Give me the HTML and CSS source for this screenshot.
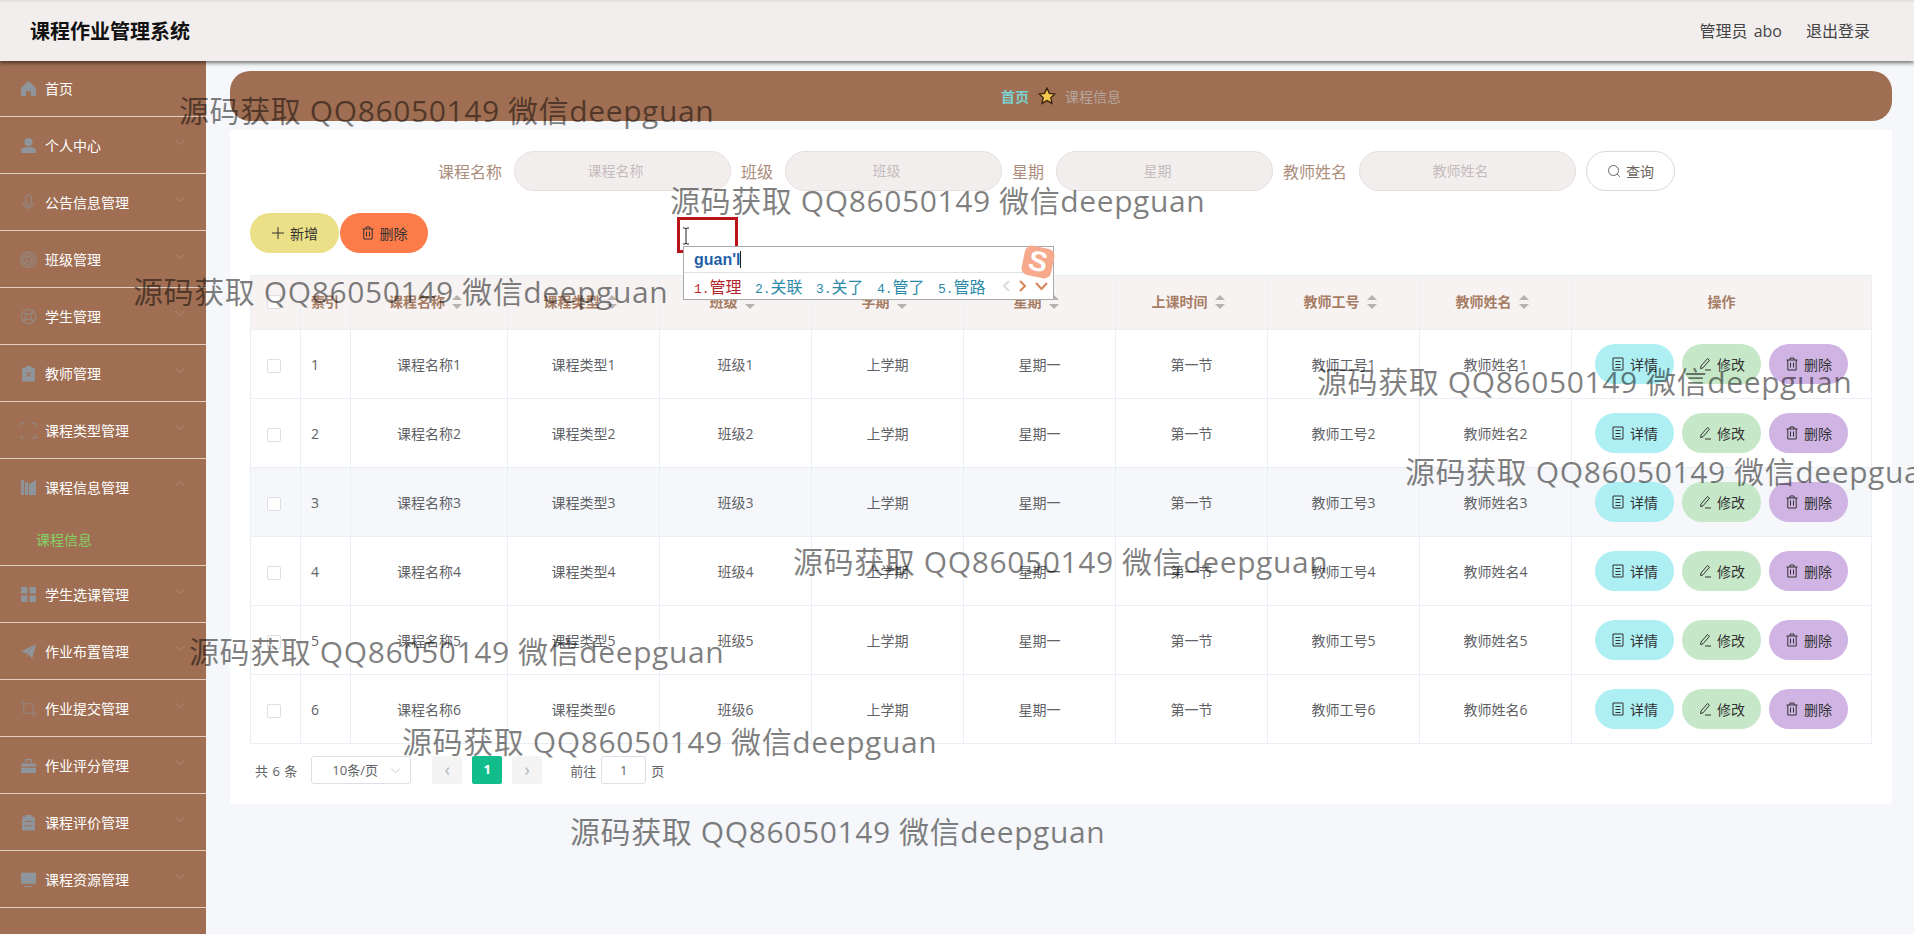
FILE: index.html
```html
<!DOCTYPE html>
<html lang="zh-CN">
<head>
  <meta charset="UTF-8">
  <title>课程作业管理系统</title>
  <link rel="stylesheet" href="styles.css">
</head>

<body>

<svg class="sprite" xmlns="http://www.w3.org/2000/svg">
  <symbol id="i-home" viewBox="0 0 16 16"><path d="M8 1 15 7.2V15H10.3V10.5H5.7V15H1V7.2Z" fill="currentColor"/></symbol>
  <symbol id="i-user" viewBox="0 0 16 16"><circle cx="8" cy="4.8" r="3.8" fill="currentColor"/><path d="M1 15V12.8C1 10.4 4 9.3 8 9.3S15 10.4 15 12.8V15Z" fill="currentColor"/></symbol>
  <symbol id="i-mic" viewBox="0 0 16 16"><g fill="none" stroke="currentColor" stroke-width="1.2"><rect x="5.4" y="1" width="5.2" height="9.4" rx="2.6"/><path d="M3.2 8.2C3.2 11 5.2 12.6 8 12.6S12.8 11 12.8 8.2M8 12.6V15.4"/></g></symbol>
  <symbol id="i-ring" viewBox="0 0 16 16"><g fill="none" stroke="currentColor" stroke-width="1.2"><circle cx="8" cy="8" r="7.2"/><circle cx="8" cy="8" r="5"/><circle cx="8" cy="8" r="2.6"/></g></symbol>
  <symbol id="i-help" viewBox="0 0 16 16"><g fill="none" stroke="currentColor"><circle cx="8" cy="8" r="6.8" stroke-width="1.2"/><circle cx="8" cy="8" r="2.8" stroke-width="1.2"/><path d="M3.2 3.2 6 6M12.8 3.2 10 6M3.2 12.8 6 10M12.8 12.8 10 10" stroke-width="1.8"/></g></symbol>
  <symbol id="i-badge" viewBox="0 0 16 16"><path d="M2 2.5H5.5V1H10.5V2.5H14V15.5H2Z" fill="currentColor"/><path d="M6 7 10 11M10 7 6 11" stroke="#a06f53" stroke-width="1.1"/></symbol>
  <symbol id="i-full" viewBox="0 0 16 16"><path d="M1 4.5V1H4.5M11.5 1H15V4.5M15 11.5V15H11.5M4.5 15H1V11.5" fill="none" stroke="currentColor" stroke-width="1.1"/></symbol>
  <symbol id="i-books" viewBox="0 0 16 16"><path d="M1 1H3.6V15H1ZM4.6 3H7.6V15H4.6ZM8.4 3 10 5 11.6 3 15 1V15H8.4Z" fill="currentColor"/></symbol>
  <symbol id="i-grid" viewBox="0 0 16 16"><path d="M1 1H7V7H1ZM9 1H15V7H9ZM1 9H7V15H1ZM9 9H15V15H9Z" fill="currentColor"/></symbol>
  <symbol id="i-send" viewBox="0 0 16 16"><path d="M15 1 11.5 14.5 7.8 10 6.5 14V9.3ZM15 1 1 8 5.6 9.6Z" fill="currentColor"/></symbol>
  <symbol id="i-crop" viewBox="0 0 16 16"><path d="M3.5 0V12.5H16M0 3.5H12.5V16" fill="none" stroke="currentColor" stroke-width="1.1"/></symbol>
  <symbol id="i-case" viewBox="0 0 16 16"><path d="M1 6H15V9H1ZM1 10H15V15H1Z" fill="currentColor"/><path d="M5.5 5.5V2.5H10.5V5.5" fill="none" stroke="currentColor" stroke-width="1.3"/></symbol>
  <symbol id="i-order" viewBox="0 0 16 16"><path d="M2 2.5H5V1H11V2.5H14V15.5H2Z" fill="currentColor"/><path d="M4.5 7H11.5M4.5 11H11.5" stroke="#a06f53" stroke-width="1"/></symbol>
  <symbol id="i-monitor" viewBox="0 0 16 16"><path d="M1 1.5H15V12H1Z" fill="currentColor"/><path d="M4.5 14.5H11.5" stroke="currentColor" stroke-width="1"/></symbol>
  <symbol id="i-down" viewBox="0 0 12 12"><path d="M1.5 4 6 8.5 10.5 4" fill="none" stroke="currentColor" stroke-width="1"/></symbol>
  <symbol id="i-up" viewBox="0 0 12 12"><path d="M1.5 8 6 3.5 10.5 8" fill="none" stroke="currentColor" stroke-width="1"/></symbol>
  <symbol id="i-plus" viewBox="0 0 14 14"><path d="M7 1V13M1 7H13" fill="none" stroke="currentColor" stroke-width="1"/></symbol>
  <symbol id="i-trash" viewBox="0 0 14 14"><path d="M1.5 3H12.5M5 3V1H9V3M2.8 3V13H11.2V3M5.5 5.5V10.5M8.5 5.5V10.5" fill="none" stroke="currentColor" stroke-width="1"/></symbol>
  <symbol id="i-doc" viewBox="0 0 14 14"><path d="M2 1H12V13H2ZM4.5 4.5H9.5M4.5 7.5H9.5M4.5 10.5H9.5" fill="none" stroke="currentColor" stroke-width="1"/></symbol>
  <symbol id="i-edit" viewBox="0 0 14 14"><path d="M3 9 9.5 1.5 11.5 3.2 5 10.8 2.6 11.6ZM7 13H13" fill="none" stroke="currentColor" stroke-width="1"/></symbol>
  <symbol id="i-search" viewBox="0 0 14 14"><path d="M6.5 1.5A5 5 0 1 0 6.5 11.5 5 5 0 1 0 6.5 1.5ZM10.2 10.2 12.8 12.8" fill="none" stroke="currentColor" stroke-width="1"/></symbol>
</svg>

<div class="topbar">
  <div class="brand">课程作业管理系统</div>
  <div class="topbarRight">
    <span class="adminName">管理员 abo</span>
    <span>退出登录</span>
  </div>
</div>

<div class="layout">
  <div class="sidebar">
    <div class="menuItem"><svg class="menuIcon"><use href="#i-home"/></svg><span>首页</span></div>
    <div class="menuItem"><svg class="menuIcon"><use href="#i-user"/></svg><span>个人中心</span><svg class="menuArrow"><use href="#i-down"/></svg></div>
    <div class="menuItem"><svg class="menuIcon thinIcon"><use href="#i-mic"/></svg><span>公告信息管理</span><svg class="menuArrow"><use href="#i-down"/></svg></div>
    <div class="menuItem"><svg class="menuIcon thinIcon"><use href="#i-ring"/></svg><span>班级管理</span><svg class="menuArrow"><use href="#i-down"/></svg></div>
    <div class="menuItem"><svg class="menuIcon thinIcon"><use href="#i-help"/></svg><span>学生管理</span><svg class="menuArrow"><use href="#i-down"/></svg></div>
    <div class="menuItem"><svg class="menuIcon"><use href="#i-badge"/></svg><span>教师管理</span><svg class="menuArrow"><use href="#i-down"/></svg></div>
    <div class="menuItem"><svg class="menuIcon thinIcon"><use href="#i-full"/></svg><span>课程类型管理</span><svg class="menuArrow"><use href="#i-down"/></svg></div>
    <div class="menuGroup">
      <div class="menuTitle"><svg class="menuIcon"><use href="#i-books"/></svg><span>课程信息管理</span><svg class="menuArrow"><use href="#i-up"/></svg></div>
      <div class="subItem">课程信息</div>
    </div>
    <div class="menuItem"><svg class="menuIcon"><use href="#i-grid"/></svg><span>学生选课管理</span><svg class="menuArrow"><use href="#i-down"/></svg></div>
    <div class="menuItem"><svg class="menuIcon"><use href="#i-send"/></svg><span>作业布置管理</span><svg class="menuArrow"><use href="#i-down"/></svg></div>
    <div class="menuItem"><svg class="menuIcon thinIcon"><use href="#i-crop"/></svg><span>作业提交管理</span><svg class="menuArrow"><use href="#i-down"/></svg></div>
    <div class="menuItem"><svg class="menuIcon"><use href="#i-case"/></svg><span>作业评分管理</span><svg class="menuArrow"><use href="#i-down"/></svg></div>
    <div class="menuItem"><svg class="menuIcon"><use href="#i-order"/></svg><span>课程评价管理</span><svg class="menuArrow"><use href="#i-down"/></svg></div>
    <div class="menuItem"><svg class="menuIcon"><use href="#i-monitor"/></svg><span>课程资源管理</span><svg class="menuArrow"><use href="#i-down"/></svg></div>
  </div>

  <div class="main">
    <div class="crumb">
      <span class="crumbHome">首页</span>
      <svg class="crumbStar" viewBox="0 0 16 16"><path d="M8 1 10.100 5.600 15 6.200 11.400 9.600 12.400 14.600 8 12.100 3.600 14.600 4.600 9.600 1 6.200 5.900 5.600Z" fill="#f5c94e" stroke="#3d2410" stroke-width="1.200"/></svg>
      <span class="crumbPage">课程信息</span>
    </div>

    <div class="card">
      <div class="searchRow">
        <div class="field"><label>课程名称</label><div class="searchInput">课程名称</div></div>
        <div class="field"><label>班级</label><div class="searchInput">班级</div></div>
        <div class="field"><label>星期</label><div class="searchInput">星期</div></div>
        <div class="field"><label>教师姓名</label><div class="searchInput">教师姓名</div></div>
        <div class="searchButton"><svg class="btnIcon"><use href="#i-search"/></svg>查询</div>
      </div>

      <div class="toolbar">
        <div class="pill pillAdd"><svg class="btnIcon"><use href="#i-plus"/></svg>新增</div>
        <div class="pill pillRemove"><svg class="btnIcon"><use href="#i-trash"/></svg>删除</div>
      </div>

      <table class="dataTable">
        <colgroup>
          <col class="colSmall"><col class="colSmall"><col class="colName">
          <col class="colNormal"><col class="colNormal"><col class="colNormal"><col class="colNormal"><col class="colNormal"><col class="colNormal"><col class="colNormal">
          <col class="colActions">
        </colgroup>
        <tr>
          <th class="checkCell"><span class="checkbox"></span></th>
          <th class="leftCell">索引</th>
          <th>课程名称<span class="sort"></span></th>
          <th>课程类型<span class="sort"></span></th>
          <th>班级<span class="sort"></span></th>
          <th>学期<span class="sort"></span></th>
          <th>星期<span class="sort"></span></th>
          <th>上课时间<span class="sort"></span></th>
          <th>教师工号<span class="sort"></span></th>
          <th>教师姓名<span class="sort"></span></th>
          <th>操作</th>
        </tr>
        <tr>
          <td class="checkCell"><span class="checkbox"></span></td><td class="leftCell">1</td><td>课程名称1</td><td>课程类型1</td><td>班级1</td><td>上学期</td><td>星期一</td><td>第一节</td><td>教师工号1</td><td>教师姓名1</td>
          <td><div class="actions"><div class="pill pillView"><svg class="btnIcon"><use href="#i-doc"/></svg>详情</div><div class="pill pillEdit"><svg class="btnIcon"><use href="#i-edit"/></svg>修改</div><div class="pill pillDelete"><svg class="btnIcon"><use href="#i-trash"/></svg>删除</div></div></td>
        </tr>
        <tr>
          <td class="checkCell"><span class="checkbox"></span></td><td class="leftCell">2</td><td>课程名称2</td><td>课程类型2</td><td>班级2</td><td>上学期</td><td>星期一</td><td>第一节</td><td>教师工号2</td><td>教师姓名2</td>
          <td><div class="actions"><div class="pill pillView"><svg class="btnIcon"><use href="#i-doc"/></svg>详情</div><div class="pill pillEdit"><svg class="btnIcon"><use href="#i-edit"/></svg>修改</div><div class="pill pillDelete"><svg class="btnIcon"><use href="#i-trash"/></svg>删除</div></div></td>
        </tr>
        <tr class="hoverRow">
          <td class="checkCell"><span class="checkbox"></span></td><td class="leftCell">3</td><td>课程名称3</td><td>课程类型3</td><td>班级3</td><td>上学期</td><td>星期一</td><td>第一节</td><td>教师工号3</td><td>教师姓名3</td>
          <td><div class="actions"><div class="pill pillView"><svg class="btnIcon"><use href="#i-doc"/></svg>详情</div><div class="pill pillEdit"><svg class="btnIcon"><use href="#i-edit"/></svg>修改</div><div class="pill pillDelete"><svg class="btnIcon"><use href="#i-trash"/></svg>删除</div></div></td>
        </tr>
        <tr>
          <td class="checkCell"><span class="checkbox"></span></td><td class="leftCell">4</td><td>课程名称4</td><td>课程类型4</td><td>班级4</td><td>上学期</td><td>星期一</td><td>第一节</td><td>教师工号4</td><td>教师姓名4</td>
          <td><div class="actions"><div class="pill pillView"><svg class="btnIcon"><use href="#i-doc"/></svg>详情</div><div class="pill pillEdit"><svg class="btnIcon"><use href="#i-edit"/></svg>修改</div><div class="pill pillDelete"><svg class="btnIcon"><use href="#i-trash"/></svg>删除</div></div></td>
        </tr>
        <tr>
          <td class="checkCell"><span class="checkbox"></span></td><td class="leftCell">5</td><td>课程名称5</td><td>课程类型5</td><td>班级5</td><td>上学期</td><td>星期一</td><td>第一节</td><td>教师工号5</td><td>教师姓名5</td>
          <td><div class="actions"><div class="pill pillView"><svg class="btnIcon"><use href="#i-doc"/></svg>详情</div><div class="pill pillEdit"><svg class="btnIcon"><use href="#i-edit"/></svg>修改</div><div class="pill pillDelete"><svg class="btnIcon"><use href="#i-trash"/></svg>删除</div></div></td>
        </tr>
        <tr>
          <td class="checkCell"><span class="checkbox"></span></td><td class="leftCell">6</td><td>课程名称6</td><td>课程类型6</td><td>班级6</td><td>上学期</td><td>星期一</td><td>第一节</td><td>教师工号6</td><td>教师姓名6</td>
          <td><div class="actions"><div class="pill pillView"><svg class="btnIcon"><use href="#i-doc"/></svg>详情</div><div class="pill pillEdit"><svg class="btnIcon"><use href="#i-edit"/></svg>修改</div><div class="pill pillDelete"><svg class="btnIcon"><use href="#i-trash"/></svg>删除</div></div></td>
        </tr>
      </table>

      <div class="pager">
        <span class="pagerTotal">共 6 条</span>
        <div class="pagerSize">10条/页<svg class="pagerArrow"><use href="#i-down"/></svg></div>
        <div class="pageBtn">‹</div>
        <div class="pageBtn pageActive">1</div>
        <div class="pageBtn">›</div>
        <span class="pagerGoto">前往</span>
        <div class="pagerInput">1</div>
        <span>页</span>
      </div>
    </div>
  </div>
</div>

<!-- input method popup sits over the page -->
<div class="redBox"></div>
<svg class="textCursor" viewBox="0 0 8 18"><path d="M1 1H3.2L4 2 4.8 1H7M4 2V16M1 17H3.2L4 16 4.8 17H7" fill="none" stroke="#222" stroke-width="1"/></svg>
<div class="ime">
  <div class="imeInput">guan'l<span class="imeCaret"></span></div>
  <div class="imeList">
    <span class="imeWord imeFirst"><i>1.</i>管理</span>
    <span class="imeWord"><i>2.</i>关联</span>
    <span class="imeWord"><i>3.</i>关了</span>
    <span class="imeWord"><i>4.</i>管了</span>
    <span class="imeWord"><i>5.</i>管路</span>
    <svg class="imeArrows" viewBox="0 0 48 14"><path d="M7 2 2 7 7 12" fill="none" stroke="#ddd" stroke-width="2"/><path d="M18 2 23 7 18 12" fill="none" stroke="#d9855a" stroke-width="2"/><path d="M34 4 39.500 10 45 4" fill="none" stroke="#d9855a" stroke-width="2"/></svg>
  </div>
  <div class="imeLogo"><span>S</span></div>
</div>

<div class="watermarks">
  <div class="wm wm1">源码获取 QQ86050149 微信deepguan</div>
  <div class="wm wm2">源码获取 QQ86050149 微信deepguan</div>
  <div class="wm wm3">源码获取 QQ86050149 微信deepguan</div>
  <div class="wm wm4">源码获取 QQ86050149 微信deepguan</div>
  <div class="wm wm5">源码获取 QQ86050149 微信deepguan</div>
  <div class="wm wm6">源码获取 QQ86050149 微信deepguan</div>
  <div class="wm wm7">源码获取 QQ86050149 微信deepguan</div>
  <div class="wm wm8">源码获取 QQ86050149 微信deepguan</div>
  <div class="wm wm9">源码获取 QQ86050149 微信deepguan</div>
  <div class="wm wm10">源码获取 QQ86050149 微信deepguan</div>
</div>

</body>

</html>
```
FILE: styles.css
```css
* {
  box-sizing: border-box;
}

html, body {
  height: 100%;
}

body {
  margin: 0;
  height: 934px;
  overflow: hidden;
  position: relative;
  display: flex;
  flex-direction: column;
  background-color: #f5f7fa;
  color: #606266;
  font-family: "Open Sans", "Noto Sans CJK SC", sans-serif;
  font-size: 14px;
}

.sprite {
  display: none;
}

.topbar {
  height: 61px;
  flex-shrink: 0;
  position: relative;
  z-index: 2;
  display: flex;
  justify-content: space-between;
  align-items: center;
  padding: 0 44px 3px 30px;
  background-color: #f3eeee;
  border-top: 2px solid #e4e1e1;
  box-shadow: 0 2px 4px rgba(0, 0, 0, 0.55);
}

.brand {
  font-size: 20px;
  font-weight: 700;
  color: #111;
}

.topbarRight {
  display: flex;
  gap: 24px;
  font-size: 16px;
  color: #444;
}

.adminName {
  word-spacing: 2px;
}

.layout {
  flex: 1;
  display: flex;
  min-height: 0;
}

/* left menu */
.sidebar {
  width: 206px;
  flex-shrink: 0;
  margin-top: -1px;
  background-color: #a06f53;
  color: #fff;
}

.menuItem, .menuGroup {
  border-bottom: 1px solid #e3cfc2;
}

.menuItem, .menuTitle {
  display: flex;
  align-items: center;
  padding-left: 20px;
  position: relative;
}

.menuItem {
  height: 57px;
}

.menuTitle {
  height: 56px;
}

.menuIcon {
  width: 17px;
  height: 17px;
  margin-right: 8px;
  color: #8f959c;
  flex-shrink: 0;
}

.thinIcon {
  opacity: 0.6;
}

.menuArrow {
  width: 12px;
  height: 12px;
  position: absolute;
  right: 20px;
  top: 19px;
  color: #b48a70;
}

.subItem {
  height: 50px;
  line-height: 50px;
  padding-left: 36px;
  color: #85cf66;
}

/* main area */
.main {
  flex: 1;
  min-width: 0;
  padding: 10px 22px 0 24px;
}

.crumb {
  height: 50px;
  display: flex;
  justify-content: center;
  align-items: center;
  background-color: #a06f53;
  border-radius: 20px;
  margin-bottom: 9px;
}

.crumbHome {
  color: #79d3d3;
  font-weight: 700;
}

.crumbStar {
  width: 18px;
  height: 18px;
  margin: 0 9px;
}

.crumbPage {
  color: #b5a59c;
}

.card {
  background-color: #fff;
  padding: 21px 21px 20px 20px;
}

.searchRow {
  display: flex;
  justify-content: center;
  gap: 10px;
  padding-right: 8px;
  margin-bottom: 22px;
}

.field {
  display: flex;
  align-items: center;
}

.field label {
  font-size: 16px;
  color: #ab8d7c;
  margin-right: 12px;
}

.searchInput {
  width: 217px;
  height: 40px;
  line-height: 38px;
  text-align: center;
  padding-right: 14px;
  border: 1px solid #e6dfdf;
  border-radius: 20px;
  background-color: #f3eeee;
  color: #c4bcbc;
}

.searchButton {
  width: 89px;
  height: 40px;
  display: flex;
  justify-content: center;
  align-items: center;
  border: 1px solid #dfd8d5;
  border-radius: 20px;
  background-color: #fff;
  color: #6b6360;
}

.btnIcon {
  width: 14px;
  height: 14px;
  margin-right: 5px;
  flex-shrink: 0;
}

.toolbar {
  display: flex;
  gap: 1px;
  margin-bottom: 22px;
}

.pill {
  height: 40px;
  display: flex;
  justify-content: center;
  align-items: center;
  border-radius: 20px;
  color: #333;
}

.pillAdd {
  width: 89px;
  background-color: #ebdf87;
}

.pillRemove {
  width: 88px;
  background-color: #fd7c4a;
}

.pillView {
  width: 79px;
  background-color: #aeeff3;
}

.pillEdit {
  width: 79px;
  background-color: #c6e8c9;
}

.pillDelete {
  width: 79px;
  background-color: #cfb4e4;
}

/* table */
.dataTable {
  width: 1621px;
  table-layout: fixed;
  border-collapse: collapse;
  border: 1px solid #ebeef5;
}

.colSmall {
  width: 50px;
}

.colName {
  width: 157px;
}

.colNormal {
  width: 152px;
}

.colActions {
  width: 300px;
}

.dataTable th, .dataTable td {
  border: 1px solid #ebeef5;
  text-align: center;
  padding: 0;
}

.dataTable th {
  height: 54px;
  padding-bottom: 4px;
  background-color: #f7f3f2;
  color: #a77d65;
  font-weight: 700;
}

.dataTable td {
  height: 69px;
}

.dataTable .leftCell {
  text-align: left;
  padding-left: 10px;
}

.dataTable .checkCell {
  padding-right: 3px;
}

.hoverRow td {
  background-color: #f5f7fa;
}

.checkbox {
  display: inline-block;
  width: 14px;
  height: 14px;
  vertical-align: middle;
  border: 1px solid #dcdfe6;
  border-radius: 2px;
  background-color: #fff;
}

.sort {
  display: inline-block;
  position: relative;
  width: 24px;
  height: 14px;
  vertical-align: -2px;
}

.sort::before, .sort::after {
  content: "";
  position: absolute;
  left: 7px;
  border-left: 5px solid transparent;
  border-right: 5px solid transparent;
}

.sort::before {
  top: 0;
  border-bottom: 5px solid #b8b2ae;
}

.sort::after {
  bottom: 0;
  border-top: 5px solid #b8b2ae;
}

.actions {
  display: flex;
  justify-content: center;
  gap: 8px;
}

/* pagination */
.pager {
  display: flex;
  align-items: center;
  height: 28px;
  margin-top: 12px;
  font-size: 13px;
  color: #606266;
  padding-left: 5px;
}

.pagerTotal {
  margin-right: 14px;
  word-spacing: 1px;
}

.pagerSize {
  width: 100px;
  height: 28px;
  line-height: 26px;
  text-align: center;
  padding-right: 12px;
  border: 1px solid #dcdfe6;
  border-radius: 3px;
  position: relative;
  margin-right: 21px;
}

.pagerArrow {
  width: 11px;
  height: 11px;
  position: absolute;
  right: 9px;
  top: 8px;
  color: #c0c4cc;
}

.pageBtn {
  width: 30px;
  height: 28px;
  line-height: 26px;
  text-align: center;
  font-size: 18px;
  margin-right: 10px;
  border-radius: 2px;
  background-color: #f4f4f5;
  color: #b4b6bb;
}

.pageActive {
  background-color: #12bd8c;
  color: #fff;
  font-size: 13px;
  font-weight: 700;
}

.pagerGoto {
  margin-left: 18px;
  margin-right: 5px;
}

.pagerInput {
  width: 45px;
  height: 28px;
  line-height: 26px;
  text-align: center;
  border: 1px solid #dcdfe6;
  border-radius: 3px;
  margin-right: 5px;
}

/* input method popup */
.redBox {
  position: absolute;
  left: 677px;
  top: 217px;
  width: 61px;
  height: 36px;
  border: 3px solid #b8141a;
}

.textCursor {
  position: absolute;
  left: 682px;
  top: 227px;
  width: 8px;
  height: 18px;
}

.ime {
  position: absolute;
  left: 683px;
  top: 246px;
  width: 371px;
  height: 54px;
  background-color: #fff;
  border: 1px solid #a9a9a9;
}

.imeInput {
  height: 26px;
  margin-right: 30px;
  padding-left: 10px;
  display: flex;
  align-items: center;
  border-bottom: 1px solid #e0e0e0;
  font-family: "Liberation Sans", sans-serif;
  font-size: 16px;
  font-weight: 700;
  color: #1f5fa8;
}

.imeCaret {
  width: 1px;
  height: 17px;
  background-color: #222;
}

.imeList {
  height: 26px;
  display: flex;
  align-items: center;
  gap: 15px;
  padding-left: 10px;
  font-size: 16px;
  color: #2b8aa8;
  position: relative;
}

.imeWord {
  width: 46px;
  white-space: nowrap;
}

.imeWord i {
  font-family: "Liberation Mono", monospace;
  font-style: normal;
  font-size: 13px;
}

.imeFirst {
  color: #b3262c;
}

.imeArrows {
  position: absolute;
  left: 318px;
  top: 6px;
  width: 48px;
  height: 14px;
}

.imeLogo {
  position: absolute;
  right: 0;
  top: 0;
  width: 30px;
  height: 30px;
  border-radius: 7px;
  transform: rotate(12deg);
  background-color: #f6a98b;
  text-align: center;
}

.imeLogo span {
  font-family: "Liberation Sans", sans-serif;
  font-size: 28px;
  line-height: 30px;
  font-weight: 700;
  color: #fff;
}

/* watermark lines laid over everything */
.watermarks {
  position: absolute;
  left: 0;
  top: 0;
  width: 1914px;
  height: 934px;
  overflow: hidden;
  pointer-events: none;
}

.wm {
  position: absolute;
  white-space: nowrap;
  font-size: 30px;
  line-height: 40px;
  letter-spacing: 0.6px;
  color: rgba(0, 0, 0, 0.5);
}

.wm1 { left: 538px; top: 1px; }
.wm2 { left: 179px; top: 91px; }
.wm3 { left: 670px; top: 181px; }
.wm4 { left: 133px; top: 272px; }
.wm5 { left: 1317px; top: 362px; }
.wm6 { left: 1405px; top: 452px; }
.wm7 { left: 793px; top: 542px; }
.wm8 { left: 189px; top: 632px; }
.wm9 { left: 402px; top: 722px; }
.wm10 { left: 570px; top: 812px; }
```
